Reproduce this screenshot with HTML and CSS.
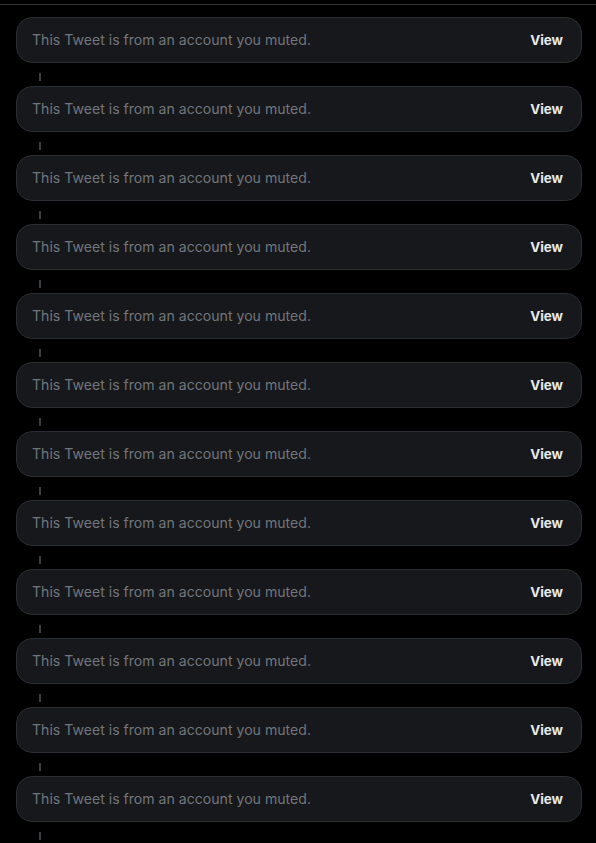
FILE: index.html
```html
<!DOCTYPE html>
<html>
<head>
<meta charset="utf-8">
<link rel="stylesheet" href="styles.css">
</head>
<body>
<div class="topline"></div>
<div class="thread">
  <div class="item"><div class="card"><span class="msg">This Tweet is from an account you muted.</span><span class="view">View</span></div><div class="conn"></div></div>
  <div class="item"><div class="card"><span class="msg">This Tweet is from an account you muted.</span><span class="view">View</span></div><div class="conn"></div></div>
  <div class="item"><div class="card"><span class="msg">This Tweet is from an account you muted.</span><span class="view">View</span></div><div class="conn"></div></div>
  <div class="item"><div class="card"><span class="msg">This Tweet is from an account you muted.</span><span class="view">View</span></div><div class="conn"></div></div>
  <div class="item"><div class="card"><span class="msg">This Tweet is from an account you muted.</span><span class="view">View</span></div><div class="conn"></div></div>
  <div class="item"><div class="card"><span class="msg">This Tweet is from an account you muted.</span><span class="view">View</span></div><div class="conn"></div></div>
  <div class="item"><div class="card"><span class="msg">This Tweet is from an account you muted.</span><span class="view">View</span></div><div class="conn"></div></div>
  <div class="item"><div class="card"><span class="msg">This Tweet is from an account you muted.</span><span class="view">View</span></div><div class="conn"></div></div>
  <div class="item"><div class="card"><span class="msg">This Tweet is from an account you muted.</span><span class="view">View</span></div><div class="conn"></div></div>
  <div class="item"><div class="card"><span class="msg">This Tweet is from an account you muted.</span><span class="view">View</span></div><div class="conn"></div></div>
  <div class="item"><div class="card"><span class="msg">This Tweet is from an account you muted.</span><span class="view">View</span></div><div class="conn"></div></div>
  <div class="item"><div class="card"><span class="msg">This Tweet is from an account you muted.</span><span class="view">View</span></div><div class="conn"></div></div>
</div>
</body>
</html>
```
FILE: styles.css
```css
html, body {
  margin: 0;
  padding: 0;
  background: #000;
  overflow: hidden;
}
body {
  font-family: Inter, "Noto Sans", sans-serif;
  padding-top: 4px;
}
.topline {
  height: 1px;
  background: #2f3336;
}
.thread {
  padding: 12px 14px 0 16px;
  display: flex;
  flex-direction: column;
}
.item {
  display: flex;
  flex-direction: column;
}
.card {
  box-sizing: border-box;
  height: 46px;
  border: 1px solid #2a2d31;
  background: #17181c;
  border-radius: 16px;
  display: flex;
  align-items: center;
  justify-content: space-between;
  padding: 0 18px 2px 15px;
}
.msg {
  color: #71767b;
  font-size: 14.1px;
}
.view {
  color: #e7e9ea;
  font-size: 13.4px;
  font-weight: 700;
  padding-top: 2px;
}
.conn {
  width: 2px;
  height: 8px;
  background: #3b3f44;
  margin: 10px 0 5px 23px;
}
```
